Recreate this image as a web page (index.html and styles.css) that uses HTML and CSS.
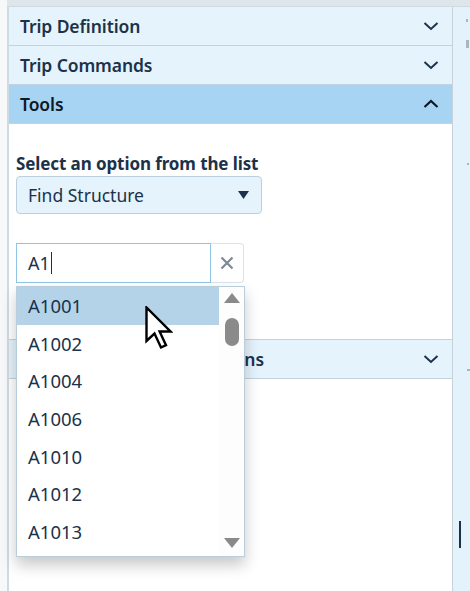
FILE: index.html
```html
<!DOCTYPE html>
<html>
<head>
<meta charset="utf-8">
<link rel="stylesheet" href="styles.css">
</head>
<body>
<div class="topbar"></div>
<div class="main">
  <div class="gutter"></div>
  <div class="panel">
    <div class="acc-header"><span class="acc-title">Trip Definition</span>
      <svg class="chev" width="16" height="10" viewBox="0 0 16 10"><path d="M1.5 2 L8 8 L14.5 2" fill="none" stroke="#1b324a" stroke-width="2"/></svg></div>
    <div class="acc-header"><span class="acc-title">Trip Commands</span>
      <svg class="chev" width="16" height="10" viewBox="0 0 16 10"><path d="M1.5 2 L8 8 L14.5 2" fill="none" stroke="#1b324a" stroke-width="2"/></svg></div>
    <div class="acc-header active"><span class="acc-title">Tools</span>
      <svg class="chev" width="16" height="10" viewBox="0 0 16 10"><path d="M1.5 8 L8 2 L14.5 8" fill="none" stroke="#0d1a26" stroke-width="2.2"/></svg></div>
    <div class="tools-body">
      <div class="field-label">Select an option from the list</div>
      <div class="select">
        <span>Find Structure</span>
        <svg width="11" height="8" viewBox="0 0 11 8"><path d="M0 0 H11 L5.5 8 Z" fill="#1b324a"/></svg>
      </div>
      <div class="search">
        <div class="search-input"><span>A1</span><span class="caret"></span></div>
        <div class="search-clear">
          <svg width="14" height="14" viewBox="0 0 14 14"><path d="M1.5 1.5 L12.5 12.5 M12.5 1.5 L1.5 12.5" stroke="#7d8a94" stroke-width="2.2"/></svg>
        </div>
      </div>
      <div class="dropdown">
        <ul class="options">
          <li class="hl">A1001</li>
          <li>A1002</li>
          <li>A1004</li>
          <li>A1006</li>
          <li>A1010</li>
          <li>A1012</li>
          <li>A1013</li>
        </ul>
        <div class="scrollbar">
          <svg width="16" height="10" viewBox="0 0 16 10"><path d="M0 10 L8 0 L16 10 Z" fill="#8a8a8a"/></svg>
          <div class="thumb"></div>
          <div class="track"></div>
          <svg width="16" height="10" viewBox="0 0 16 10"><path d="M0 0 L16 0 L8 10 Z" fill="#8a8a8a"/></svg>
        </div>
      </div>
      <svg class="cursor" width="28" height="44" viewBox="0 0 28 44"><path d="M1.5 1.5 L1.5 35 L9.5 27.5 L16 41.5 L21 39.2 L14.6 25.5 L25.5 25.5 Z" fill="#fff" stroke="#000" stroke-width="2.4" stroke-linejoin="miter"/></svg>
    </div>
    <div class="acc-header bordered"><span class="acc-title">Structure Inspection Options</span>
      <svg class="chev" width="16" height="10" viewBox="0 0 16 10"><path d="M1.5 2 L8 8 L14.5 2" fill="none" stroke="#1b324a" stroke-width="2"/></svg></div>
    <div class="rest"></div>
  </div>
  <div class="strip">
    <span class="mark m1"></span>
    <span class="mark m2"></span>
    <span class="mark m3"></span>
    <span class="mark m4"></span>
    <span class="bar"></span>
  </div>
</div>
</body>
</html>
```
FILE: styles.css
```css
* { box-sizing: border-box; }
html, body { margin: 0; padding: 0; }
body {
  width: 470px;
  height: 591px;
  overflow: hidden;
  background: #f6f8f9;
  font-family: "Noto Sans", "Open Sans", sans-serif;
  color: #1b324a;
}
.topbar {
  height: 7px;
  margin-left: 7px;
  background: #dfe6eb;
  border-bottom: 1px solid #cfd9e0;
}
.main {
  display: flex;
  height: 584px;
}
.gutter { width: 7px; }
.panel {
  width: 446px;
  border-left: 2px solid #cfdbe2;
  border-right: 1px solid #c6d3db;
  background: #fff;
  display: flex;
  flex-direction: column;
}
.acc-header {
  height: 39px;
  flex: none;
  background: #e5f3fc;
  border-bottom: 1px solid #c3d2dc;
  display: flex;
  align-items: center;
  justify-content: space-between;
  padding: 0 13px 0 11px;
}
.acc-header.active { background: #a7d4f2; }
.acc-header.active .acc-title { color: #0d1a26; }
.acc-header.bordered {
  border-top: 1px solid #c3d2dc;
  height: 40px;
}
.acc-title {
  font-size: 17.5px;
  font-weight: 600;
  color: #1b324a;
  letter-spacing: -0.1px;
}
.chev { display: block; }
.tools-body {
  position: relative;
  height: 215px;
  flex: none;
  padding: 29px 7px 0 7px;
}
.field-label {
  font-size: 17px;
  font-weight: 700;
  line-height: 22px;
  color: #1b324a;
  letter-spacing: -0.1px;
}
.select {
  margin-top: 1px;
  width: 246px;
  height: 38px;
  background: #e5f3fc;
  border: 1px solid #bccfdc;
  border-radius: 4px;
  display: flex;
  align-items: center;
  justify-content: space-between;
  padding: 0 12px 0 11px;
  font-size: 17.5px;
}
.select svg { display: block; }
.search {
  margin-top: 29px;
  width: 228px;
  height: 40px;
  display: flex;
}
.search-input {
  width: 195px;
  border: 1px solid #90c4e6;
  display: flex;
  align-items: center;
  padding-left: 11px;
  font-size: 18px;
  background: #fff;
}
.caret {
  display: inline-block;
  width: 1.5px;
  height: 22px;
  background: #1b324a;
  margin-left: 1px;
}
.search-clear {
  flex: 1;
  border: 1px solid #dde4e9;
  border-left: none;
  border-radius: 0 4px 4px 0;
  display: flex;
  align-items: center;
  justify-content: center;
  background: #fff;
}
.dropdown {
  position: absolute;
  left: 7px;
  top: 162px;
  width: 229px;
  height: 271px;
  background: #fff;
  border: 1px solid #b9cddb;
  box-shadow: 0 8px 14px rgba(0, 0, 0, 0.22);
  display: flex;
  z-index: 2;
}
.options {
  list-style: none;
  margin: 0;
  padding: 0;
  width: 202px;
}
.options li {
  height: 37.7px;
  line-height: 37.7px;
  padding-left: 11px;
  font-size: 18.5px;
  color: #1b324a;
}
.options li.hl { background: #b4d3e8; }
.scrollbar {
  flex: 1;
  background: #fdfdfd;
  display: flex;
  flex-direction: column;
  align-items: center;
  padding: 6px 0 8px;
}
.scrollbar svg { display: block; }
.thumb {
  margin-top: 15px;
  width: 14px;
  height: 28px;
  border-radius: 7px;
  background: #8a8a8a;
}
.track { flex: 1; }
.cursor {
  position: absolute;
  left: 136px;
  top: 182px;
  z-index: 3;
}
.rest { flex: 1; background: #fff; }
.strip {
  position: relative;
  flex: 1;
  background: #e4f2fb;
}
.mark {
  position: absolute;
  background: #a9b6bf;
}
.m1 { left: 13px; top: 12px; width: 2px; height: 3px; }
.m2 { left: 13px; top: 33px; width: 3px; height: 8px; }
.m3 { left: 14px; top: 156px; width: 2px; height: 2px; }
.m4 { left: 14px; top: 362px; width: 3px; height: 2px; }
.bar {
  position: absolute;
  left: 6px;
  top: 514px;
  width: 2px;
  height: 27px;
  background: #1b324a;
}
```
